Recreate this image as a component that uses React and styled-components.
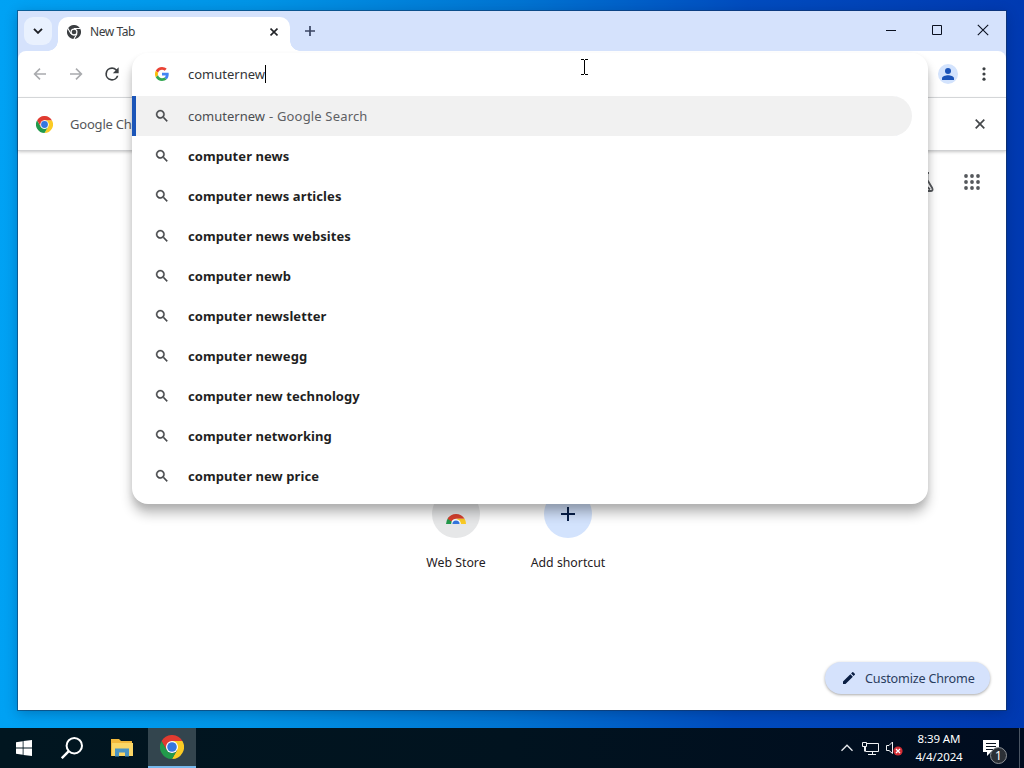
import React from "react";
import styled, { createGlobalStyle } from "styled-components";

const suggestions = [
  "computer news",
  "computer news articles",
  "computer news websites",
  "computer newb",
  "computer newsletter",
  "computer newegg",
  "computer new technology",
  "computer networking",
  "computer new price",
];

const ChromeIcon = ({ size, mono }) => {
  const c = mono
    ? { red: "#3c3f42", green: "#3c3f42", yellow: "#3c3f42", blue: "#3c3f42" }
    : { red: "#e03b30", green: "#229a4b", yellow: "#fbcb24", blue: "#3576df" };
  return (
    <svg width={size} height={size} viewBox="0 0 48 48">
      <path d="M24 12H44.8A24 24 0 0 1 24 48L34.4 30Z" fill={c.yellow} />
      <path d="M3.2 12 13.6 30A12 12 0 0 0 34.4 30L24 48A24 24 0 0 1 3.2 12Z" fill={c.green} />
      <path d="M3.2 12 13.6 30 24 12H44.8A24 24 0 0 0 3.2 12Z" fill={c.red} />
      {mono && (
        <path d="M24 12H46M13.6 30 2.6 11M34.4 30 23.4 49" stroke="#fff" strokeWidth="3.5" />
      )}
      <circle cx="24" cy="24" r="12" fill="#fff" />
      <circle cx="24" cy="24" r={mono ? 8 : 9.6} fill={c.blue} />
    </svg>
  );
};

const GoogleIcon = () => (
  <svg width="14" height="14" viewBox="0 0 48 48">
    <path fill="#ea4335" d="M24 9.5c3.54 0 6.71 1.22 9.21 3.6l6.85-6.85C35.9 2.38 30.47 0 24 0 14.62 0 6.51 5.38 2.56 13.22l7.98 6.19C12.43 13.72 17.74 9.5 24 9.5z" />
    <path fill="#4285f4" d="M46.98 24.55c0-1.57-.15-3.09-.38-4.55H24v9.02h12.94c-.58 2.96-2.26 5.48-4.78 7.18l7.73 6c4.51-4.18 7.09-10.36 7.09-17.65z" />
    <path fill="#fbbc05" d="M10.53 28.59c-.48-1.45-.76-2.99-.76-4.59s.27-3.14.76-4.59l-7.98-6.19C.92 16.46 0 20.12 0 24s.92 7.54 2.56 10.78l7.97-6.19z" />
    <path fill="#34a853" d="M24 48c6.48 0 11.93-2.13 15.89-5.81l-7.73-6c-2.15 1.45-4.92 2.3-8.16 2.3-6.26 0-11.57-4.22-13.47-9.91l-7.98 6.19C6.51 42.62 14.62 48 24 48z" />
  </svg>
);

const MagnifierIcon = () => (
  <svg width="16" height="16" viewBox="0 0 24 24" fill="#46484b" stroke="#46484b" strokeWidth=".5">
    <path d="M15.5 14h-.79l-.28-.27A6.47 6.47 0 0 0 16 9.5 6.5 6.5 0 1 0 9.5 16c1.61 0 3.09-.59 4.23-1.57l.27.28v.79l5 4.99L20.49 19l-4.99-5zm-6 0C7.01 14 5 11.99 5 9.5S7.01 5 9.5 5 14 7.01 14 9.5 11.99 14 9.5 14z" />
  </svg>
);

const ArrowIcon = ({ flip }) => (
  <svg width="16" height="16" viewBox="0 0 16 16" fill="none" stroke="#a9abae" strokeWidth="1.6">
    <path d={flip ? "M2 8H13M8 2.6 13.4 8 8 13.4" : "M14 8H3M8 2.6 2.6 8 8 13.4"} />
  </svg>
);

const ReloadIcon = () => (
  <svg width="20" height="20" viewBox="0 0 24 24" fill="#3c4043">
    <path d="M17.65 6.35A7.96 7.96 0 0 0 12 4a8 8 0 1 0 7.73 10h-2.08A6 6 0 1 1 12 6c1.66 0 3.14.69 4.22 1.78L13 11h7V4l-2.35 2.35z" />
  </svg>
);

const CrossIcon = ({ size, width, color }) => (
  <svg width={size} height={size} viewBox="0 0 10 10" stroke={color} strokeWidth={width}>
    <path d="M.7.7 9.3 9.3M9.3.7.7 9.3" />
  </svg>
);

const PlusIcon = ({ size, width, color }) => (
  <svg width={size} height={size} viewBox="0 0 14 14" stroke={color} strokeWidth={width}>
    <path d="M7 0V14M0 7H14" />
  </svg>
);

const AppsIcon = () => (
  <svg width="16" height="16" viewBox="0 0 16 16" fill="#55585c">
    {[2, 8, 14].map((y) => [2, 8, 14].map((x) => <circle key={x + "-" + y} cx={x} cy={y} r="1.9" />))}
  </svg>
);

const App = () => {
  return (
    <Desktop>
      <GlobalStyle />
      <Window>
        <TabStrip>
          <TabSearch>
            <svg width="10" height="6" viewBox="0 0 10 6" fill="none" stroke="#1d1f24" strokeWidth="1.9">
              <path d="M1 .8 5 4.8 9 .8" />
            </svg>
          </TabSearch>
          <Tab>
            <ChromeIcon size={14} mono />
            <TabTitle>New Tab</TabTitle>
            <CrossIcon size={8} width={2} color="#222428" />
          </Tab>
          <NewTab>
            <PlusIcon size={10} width={2.4} color="#3b4663" />
          </NewTab>
          <WindowButtons>
            <svg width="12" height="12" viewBox="0 0 12 12" stroke="#0a1020">
              <path d="M1 6.5H11" />
            </svg>
            <svg width="12" height="12" viewBox="0 0 12 12" fill="none" stroke="#0a1020">
              <path d="M1.5 1.5H10.5V10.5H1.5Z" />
            </svg>
            <svg width="12" height="12" viewBox="0 0 12 12" stroke="#0a1020" strokeWidth="1.1">
              <path d="M.8.8 11.2 11.2M11.2.8.8 11.2" />
            </svg>
          </WindowButtons>
        </TabStrip>

        <Toolbar>
          <ArrowIcon />
          <ArrowIcon flip />
          <ReloadIcon />
          <Spacer />
          <Avatar>
            <svg width="12" height="12" viewBox="0 0 12 12" fill="#1a53b8">
              <circle cx="6" cy="3" r="3" />
              <path d="M0 12V10.3C0 8.3 3.6 7.3 6 7.3S12 8.3 12 10.3V12Z" />
            </svg>
          </Avatar>
          <svg width="4" height="14" viewBox="0 0 4 14" fill="#3c4043">
            <circle cx="2" cy="1.8" r="1.6" />
            <circle cx="2" cy="7" r="1.6" />
            <circle cx="2" cy="12.2" r="1.6" />
          </svg>
        </Toolbar>

        <InfoBar>
          <ChromeIcon size={17} />
          <InfoText>Google Chrome</InfoText>
          <CrossIcon size={10} width={1.7} color="#44474a" />
        </InfoBar>

        <Page>
          <PageHeader>
            <svg width="18" height="20" viewBox="0 0 18 20" fill="none" stroke="#55585c" strokeWidth="1.8">
              <path d="M4 1H12M6 1V8L1 16Q0 19 2.5 19H13.6Q16.4 19 15.2 16L10.4 8V1" />
              <path d="M7 12 13 17.5" />
            </svg>
            <AppsIcon />
          </PageHeader>
          <Shortcuts>
            <Shortcut>
              <ShortcutCircle $color="#e6e7e8">
                <WebStoreIcon width="20" height="12" viewBox="0 0 20 12">
                  <path d="M0 12A10 10 0 0 1 3 5L7 12Z" fill="#229a4b" />
                  <path d="M1.5 6.8A10 10 0 0 1 18.6 6.8H10A5 5 0 0 0 5.4 9.6Z" fill="#d8402f" />
                  <path d="M10 6.8H18.6A10 10 0 0 1 20 12H14Z" fill="#fbcb24" />
                  <path d="M5.2 12A4.8 4.8 0 0 1 14.8 12Z" fill="#fff" />
                  <path d="M6.4 12A3.6 3.6 0 0 1 13.6 12Z" fill="#3576df" />
                </WebStoreIcon>
              </ShortcutCircle>
              <span>Web Store</span>
            </Shortcut>
            <Shortcut>
              <ShortcutCircle $color="#d3e3fd">
                <PlusIcon size={14} width={2} color="#061e49" />
              </ShortcutCircle>
              <span>Add shortcut</span>
            </Shortcut>
          </Shortcuts>
          <CustomizeButton>
            <svg width="12" height="12" viewBox="3 3 18 18" fill="#0b1f44">
              <path d="M3 17.25V21h3.75L17.81 9.94l-3.75-3.75L3 17.25zM20.71 7.04a1 1 0 0 0 0-1.41l-2.34-2.34a1 1 0 0 0-1.41 0l-1.83 1.83 3.75 3.75 1.83-1.83z" />
            </svg>
            Customize Chrome
          </CustomizeButton>
        </Page>

        <Omnibox>
          <QueryRow>
            <GoogleIcon />
            <Query>comuternew</Query>
            <Caret />
          </QueryRow>
          <ResultRow $selected>
            <MagnifierIcon />
            <ResultText>comuternew</ResultText>
            <Muted>- Google Search</Muted>
          </ResultRow>
          {suggestions.map((text) => (
            <ResultRow key={text}>
              <MagnifierIcon />
              <ResultText $bold>{text}</ResultText>
            </ResultRow>
          ))}
        </Omnibox>
      </Window>

      <Pointer width="7" height="16" viewBox="0 0 7 16" fill="none" stroke="#000" shapeRendering="crispEdges">
        <path d="M0 .5H3M4 .5H7M3.5 1V15M0 15.5H3M4 15.5H7" />
      </Pointer>

      <Taskbar>
        <TaskButton>
          <svg width="16" height="16" viewBox="0 0 16 16" fill="#fff">
            <path d="M0 2.2 6.7 1.2V7.6H0ZM7.5 1.1 16 0V7.6H7.5ZM0 8.4H6.7V14.8L0 13.8ZM7.5 8.4H16V16L7.5 14.9Z" />
          </svg>
        </TaskButton>
        <TaskButton>
          <svg width="22" height="22" viewBox="0 0 22 22" fill="none" stroke="#fff" strokeWidth="2">
            <circle cx="13.3" cy="8.7" r="7.7" />
            <path d="M7.8 14.2.8 21.2" strokeWidth="2.4" />
          </svg>
        </TaskButton>
        <TaskButton $wide>
          <svg width="22" height="18" viewBox="0 0 22 18">
            <path d="M0 0H8L10 2H21V17H0Z" fill="#f3b93c" />
            <path d="M1 4H22V17H1Z" fill="#fbd766" />
            <path d="M4 9.5H18V17.5H14V13.5H8V17.5H4Z" fill="#4a94c4" />
          </svg>
        </TaskButton>
        <TaskButton $active>
          <ChromeIcon size={24} />
        </TaskButton>
        <Spacer />
        <Tray>
          <svg width="12" height="8" viewBox="0 0 12 8" fill="none" stroke="#e8ebee" strokeWidth="1.3">
            <path d="M.5 6.8 6 1.2 11.5 6.8" />
          </svg>
          <svg width="17" height="14" viewBox="0 0 17 14" fill="none" stroke="#eef0f2">
            <path d="M5 2.5H16.5V10.5H3.5V6M10.5 10.5V13.5M6 13.5H14M.5 1.5H4.5V5.5H.5ZM2.5 5.5V10.5" />
          </svg>
          <svg width="17" height="15" viewBox="0 0 17 15">
            <path d="M.5 4.5H3L6.5 1V12.5L3 9.5H.5Z" fill="none" stroke="#eef0f2" />
            <circle cx="12" cy="10" r="4.6" fill="#d42e35" />
            <path d="M10 8 14 12M14 8 10 12" stroke="#fff" strokeWidth="1.3" />
          </svg>
        </Tray>
        <Clock>
          <span>8:39 AM</span>
          <span>4/4/2024</span>
        </Clock>
        <Notifications>
          <svg width="17" height="17" viewBox="0 0 17 17">
            <path d="M0 0H16V12H8L4 16V12H0Z" fill="#fff" />
            <path d="M3 3.5H13M3 6.5H13M3 9.5H10" stroke="#0a1420" />
          </svg>
          <Badge>1</Badge>
        </Notifications>
        <ShowDesktop />
      </Taskbar>
    </Desktop>
  );
};

export default App;

const GlobalStyle = createGlobalStyle`
  * {
    box-sizing: border-box;
  }

  body {
    margin: 0;
    overflow: hidden;
    font-family: "Noto Sans", "Open Sans", sans-serif;
    font-size: 13px;
    color: #1f2023;
  }

  svg {
    display: block;
    flex-shrink: 0;
  }
`;

const Desktop = styled.div`
  position: relative;
  display: flex;
  flex-direction: column;
  justify-content: flex-end;
  width: 1024px;
  height: 768px;
  overflow: hidden;
  background: linear-gradient(91deg, #00a2f4 0%, #0094e6 25%, #0074d2 50%, #004cbf 72%, #0039b1 100%);
`;

const Window = styled.div`
  position: absolute;
  left: 18px;
  top: 11px;
  width: 988px;
  height: 699px;
  display: flex;
  flex-direction: column;
  background: #d5e2fc;
  box-shadow: 0 0 0 1px rgba(20, 50, 90, 0.55), 0 3px 12px rgba(0, 20, 60, 0.3);
`;

const TabStrip = styled.div`
  display: flex;
  align-items: center;
  height: 40px;
  padding-left: 6px;
  flex-shrink: 0;
`;

const TabSearch = styled.div`
  width: 28px;
  height: 28px;
  border-radius: 9px;
  background: #e9f1fe;
  display: flex;
  align-items: center;
  justify-content: center;
`;

const Tab = styled.div`
  position: relative;
  display: flex;
  align-items: center;
  align-self: flex-end;
  width: 232px;
  height: 34px;
  margin-left: 6px;
  padding: 0 12px 4px 9px;
  border-radius: 10px 10px 0 0;
  background: #fff;

  &::before,
  &::after {
    content: "";
    position: absolute;
    bottom: 0;
    width: 10px;
    height: 10px;
  }

  &::before {
    left: -10px;
    background: radial-gradient(circle at 0 0, transparent 9.5px, #fff 10px);
  }

  &::after {
    right: -10px;
    background: radial-gradient(circle at 100% 0, transparent 9.5px, #fff 10px);
  }
`;

const TabTitle = styled.span`
  flex: 1;
  margin-left: 9px;
  color: #3a3c40;
  font-size: 12px;
  letter-spacing: -0.45px;
  line-height: 16px;
`;

const NewTab = styled.div`
  margin-left: 15px;
`;

const WindowButtons = styled.div`
  display: flex;
  gap: 34px;
  margin: 0 17px 2px auto;
`;

const Toolbar = styled.div`
  display: flex;
  align-items: center;
  height: 47px;
  padding: 0 20px 0 14px;
  gap: 20px;
  background: #fff;
  border-bottom: 1px solid #dcdee0;
  border-radius: 8px 8px 0 0;
  flex-shrink: 0;

  svg:nth-child(3) {
    margin-left: -2px;
  }
`;

const Spacer = styled.div`
  flex: 1;
`;

const Avatar = styled.div`
  width: 20px;
  height: 20px;
  margin-right: 4px;
  border-radius: 50%;
  background: #d3e3fd;
  display: flex;
  align-items: center;
  justify-content: center;
`;

const InfoBar = styled.div`
  position: relative;
  display: flex;
  align-items: center;
  height: 53px;
  padding: 0 21px 0 18px;
  background: #fff;
  border-bottom: 1px solid #cfd0d2;
  box-shadow: 0 1px 3px rgba(0, 0, 0, 0.22);
  flex-shrink: 0;
`;

const InfoText = styled.span`
  flex: 1;
  margin-left: 17px;
  color: #55575b;
  letter-spacing: -0.2px;
`;

const Page = styled.div`
  display: flex;
  flex-direction: column;
  flex: 1;
  background: #fff;
`;

const PageHeader = styled.div`
  display: flex;
  align-items: center;
  justify-content: flex-end;
  gap: 29px;
  padding: 21px 26px 0 0;
`;

const Shortcuts = styled.div`
  display: flex;
  justify-content: center;
  margin-top: 298px;
`;

const Shortcut = styled.div`
  width: 112px;
  display: flex;
  flex-direction: column;
  align-items: center;
  font-size: 12.3px;
  line-height: 18px;
  white-space: nowrap;
`;

const ShortcutCircle = styled.div`
  width: 48px;
  height: 48px;
  margin-bottom: 16px;
  border-radius: 50%;
  background: ${({ $color }) => $color};
  display: flex;
  align-items: center;
  justify-content: center;
`;

const WebStoreIcon = styled.svg`
  margin-top: 8px;
`;

const CustomizeButton = styled.div`
  display: flex;
  align-items: center;
  gap: 10px;
  width: 165px;
  height: 32px;
  margin: auto 16px 16px auto;
  padding-left: 18px;
  border-radius: 16px;
  background: #d5e2fc;
  box-shadow: 0 1px 3px rgba(0, 0, 0, 0.35);
  color: #2a3d60;
  font-size: 12.6px;
  letter-spacing: -0.18px;
  white-space: nowrap;
`;

const Omnibox = styled.div`
  position: absolute;
  left: 114px;
  top: 42px;
  width: 796px;
  height: 451px;
  border-radius: 16px;
  background: #fff;
  box-shadow: 0 10px 12px rgba(0, 0, 0, 0.24), 0 4px 6px rgba(0, 0, 0, 0.1);
`;

const QueryRow = styled.div`
  display: flex;
  align-items: center;
  height: 43px;
  padding: 0 0 1px 23px;
`;

const Query = styled.span`
  margin-left: 19px;
  color: #333538;
`;

const Caret = styled.div`
  width: 1px;
  height: 18px;
  margin-top: -1px;
  background: #000;
`;

const ResultRow = styled.div`
  display: flex;
  align-items: center;
  width: 780px;
  height: 40px;
  padding-left: 22px;
  border-radius: 0 20px 20px 0;
  background: ${({ $selected }) => ($selected ? "#f1f1f1" : "transparent")};
  box-shadow: ${({ $selected }) => ($selected ? "inset 4px 0 0 #1b55b8" : "none")};
`;

const ResultText = styled.span`
  margin-left: 18px;
  font-size: 13px;
  font-weight: ${({ $bold }) => ($bold ? 700 : 400)};
  letter-spacing: ${({ $bold }) => ($bold ? "0.08px" : "0")};
  color: ${({ $bold }) => ($bold ? "#1f1f1f" : "#4c4e51")};
`;

const Muted = styled.span`
  margin-left: 4px;
  color: #5e6064;
  letter-spacing: 0.17px;
`;

const Pointer = styled.svg`
  position: absolute;
  left: 581px;
  top: 59px;
`;

const Taskbar = styled.div`
  display: flex;
  height: 40px;
  background: linear-gradient(90deg, #011620 0%, #01131f 50%, #000c1f 100%);
`;

const TaskButton = styled.div`
  width: ${({ $wide }) => ($wide ? 52 : 48)}px;
  height: 40px;
  display: flex;
  align-items: center;
  justify-content: center;
  background: ${({ $active }) => ($active ? "#33454e" : "transparent")};
  border-bottom: ${({ $active }) => ($active ? "2px solid #76b9ed" : "none")};
`;

const Tray = styled.div`
  display: flex;
  align-items: center;
  gap: 9px;

  svg:last-child {
    margin-left: -2px;
  }
`;

const Clock = styled.div`
  width: 70px;
  display: flex;
  flex-direction: column;
  align-items: center;
  padding: 2px 0 0 2px;
  color: #fff;
  font-size: 11.5px;
  letter-spacing: -0.1px;
  line-height: 18px;
`;

const Notifications = styled.div`
  position: relative;
  width: 46px;
  padding: 12px 0 0 10px;
`;

const Badge = styled.div`
  position: absolute;
  left: 17px;
  top: 19px;
  width: 17px;
  height: 17px;
  border: 1px solid #8d9297;
  border-radius: 50%;
  background: #2b3036;
  color: #fff;
  font-size: 12px;
  line-height: 15px;
  text-align: center;
`;

const ShowDesktop = styled.div`
  width: 5px;
  border-left: 1px solid #4a5563;
`;
